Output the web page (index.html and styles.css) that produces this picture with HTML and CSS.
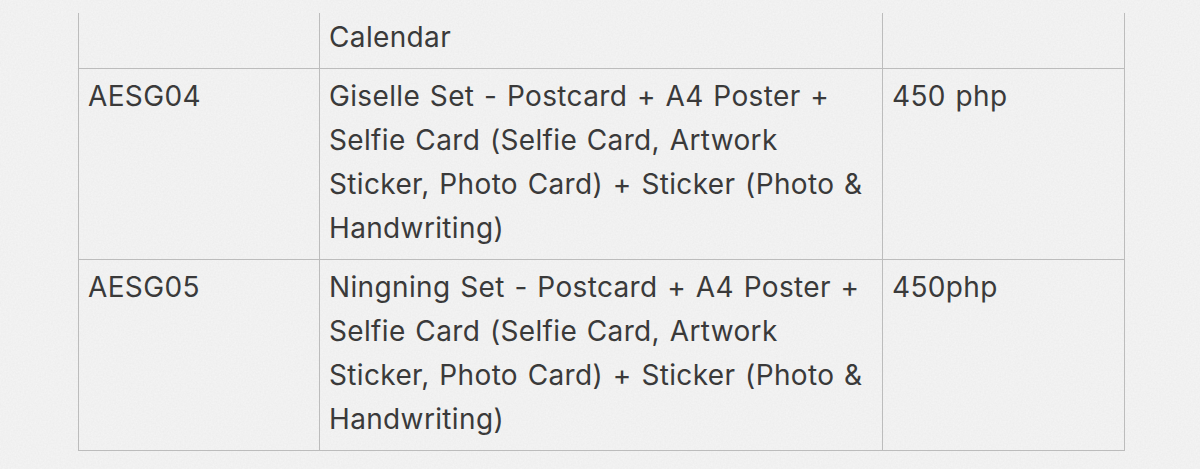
FILE: index.html
```html
<!DOCTYPE html>
<html lang="en">
<head>
<meta charset="utf-8">
<title>Price list</title>
<link rel="stylesheet" href="styles.css">
</head>
<body>
<div class="page">
  <table class="prices">
    <colgroup>
      <col class="c-code">
      <col class="c-desc">
      <col class="c-price">
    </colgroup>
    <tr class="row-first">
      <td></td>
      <td>Calendar</td>
      <td></td>
    </tr>
    <tr>
      <td>AESG04</td>
      <td>Giselle Set - Postcard + A4 Poster +<br>Selfie Card (Selfie Card, Artwork<br>Sticker, Photo Card) + Sticker (Photo &amp;<br>Handwriting)</td>
      <td>450 php</td>
    </tr>
    <tr>
      <td>AESG05</td>
      <td>Ningning Set - Postcard + A4 Poster +<br>Selfie Card (Selfie Card, Artwork<br>Sticker, Photo Card) + Sticker (Photo &amp;<br>Handwriting)</td>
      <td>450php</td>
    </tr>
  </table>
</div>
</body>
</html>
```

FILE: styles.css
```css
html, body {
  margin: 0;
  padding: 0;
  background-color: #f5f5f5;
}

body {
  background-image: url("data:image/svg+xml;utf8,<svg xmlns='http://www.w3.org/2000/svg' width='240' height='240'><filter id='n'><feTurbulence type='fractalNoise' baseFrequency='0.6' numOctaves='3' stitchTiles='stitch'/><feColorMatrix type='matrix' values='0 0 0 0 0  0 0 0 0 0  0 0 0 0 0  0 0 0 0.035 0'/></filter><rect width='240' height='240' filter='url(%23n)'/></svg>");
}

.page {
  padding: 13px 0 0 78px;
  height: 469px;
  box-sizing: border-box;
  overflow: hidden;
}

.prices {
  border-collapse: collapse;
  width: 1046px;
  table-layout: fixed;
  font-family: Inter, "Noto Sans", sans-serif;
  font-size: 28px;
  line-height: 44px;
  letter-spacing: 0.35px;
  word-spacing: 1.5px;
  color: #3a3a3a;
}

.c-code { width: 241px; }
.c-desc { width: 563px; }
.c-price { width: 242px; }

.prices td {
  border: 1px solid #bcbcbc;
  vertical-align: top;
  padding: 5px 9px 9px 9px;
  white-space: nowrap;
}

.prices .row-first td {
  border-top: none;
  padding-top: 2px;
}
```
